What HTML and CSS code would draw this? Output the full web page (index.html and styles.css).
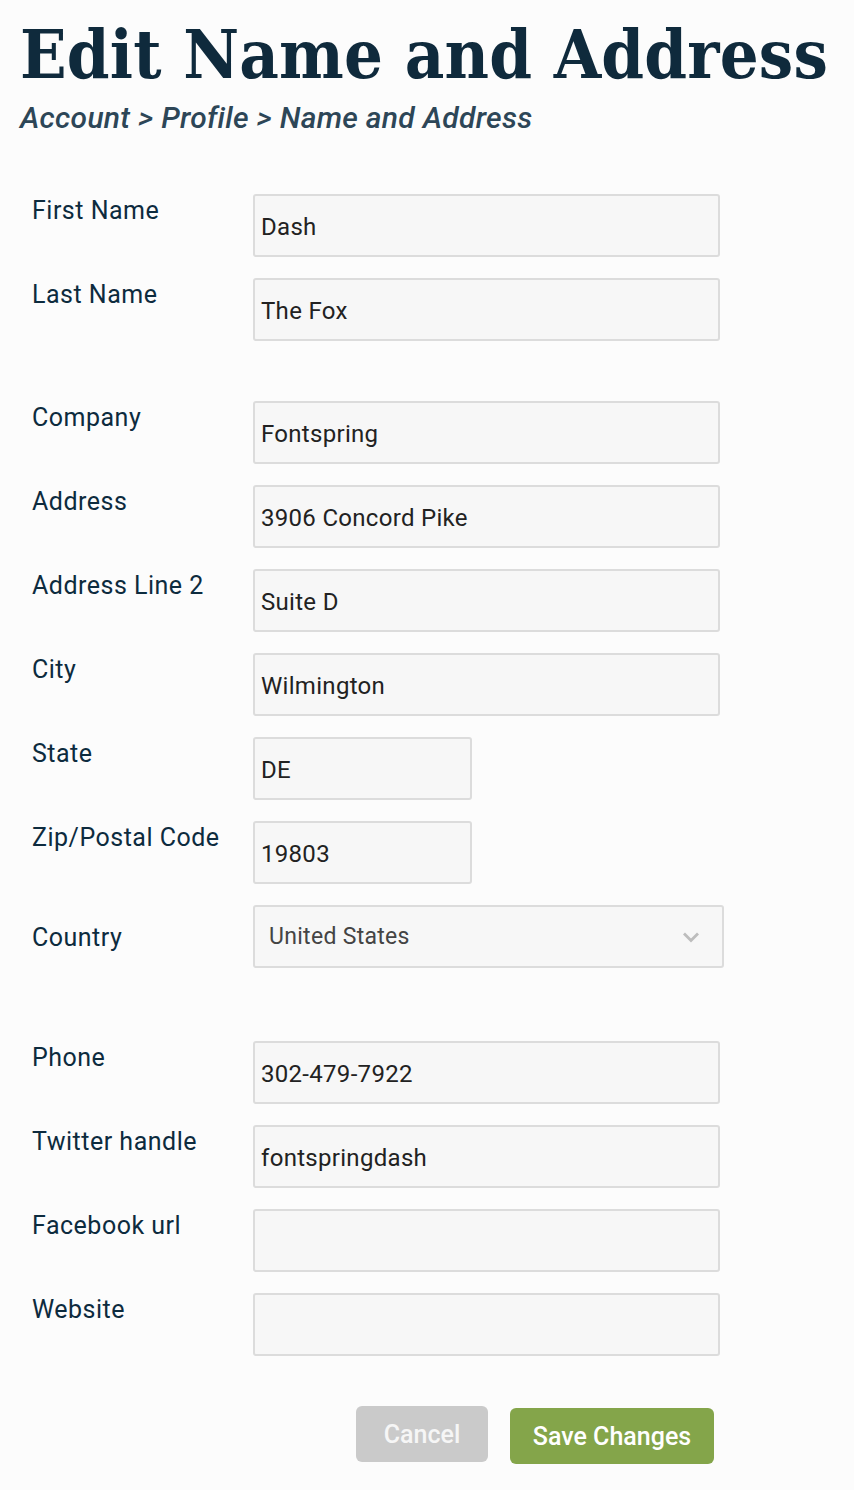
FILE: index.html
```html
<!DOCTYPE html>
<html>
<head>
<meta charset="utf-8">
<link rel="stylesheet" href="styles.css">
</head>
<body>
<div class="page">
  <h1 class="title">Edit Name and Address</h1>
  <div class="crumbs">Account &gt; Profile &gt; Name and Address</div>
  <form class="form">
    <div class="group">
      <div class="row"><label class="label">First Name</label><div class="field">Dash</div></div>
      <div class="row"><label class="label">Last Name</label><div class="field">The Fox</div></div>
    </div>
    <div class="group">
      <div class="row"><label class="label">Company</label><div class="field">Fontspring</div></div>
      <div class="row"><label class="label">Address</label><div class="field">3906 Concord Pike</div></div>
      <div class="row"><label class="label">Address Line 2</label><div class="field">Suite D</div></div>
      <div class="row"><label class="label">City</label><div class="field">Wilmington</div></div>
      <div class="row"><label class="label">State</label><div class="field short">DE</div></div>
      <div class="row"><label class="label">Zip/Postal Code</label><div class="field short">19803</div></div>
      <div class="row center"><label class="label">Country</label>
        <div class="field select">United States
          <svg class="chev" width="18" height="12" viewBox="0 0 18 12"><path d="M2 2.5 L9 9.5 L16 2.5" fill="none" stroke="#bdbdbd" stroke-width="2.8"/></svg>
        </div>
      </div>
    </div>
    <div class="group">
      <div class="row"><label class="label">Phone</label><div class="field">302-479-7922</div></div>
      <div class="row"><label class="label">Twitter handle</label><div class="field">fontspringdash</div></div>
      <div class="row"><label class="label">Facebook url</label><div class="field"></div></div>
      <div class="row"><label class="label">Website</label><div class="field"></div></div>
    </div>
    <div class="actions">
      <button type="button" class="btn cancel">Cancel</button>
      <button type="button" class="btn save">Save Changes</button>
    </div>
  </form>
</div>
</body>
</html>
```
FILE: styles.css
```css
html, body { margin: 0; padding: 0; background: #fcfcfc; }
.page { padding: 0 0 0 20px; font-family: Roboto, "Liberation Sans", sans-serif; }
.title {
  margin: 0;
  padding-top: 14px;
  font-family: "DejaVu Serif", serif;
  font-stretch: condensed;
  font-weight: bold;
  font-size: 68px;
  line-height: 80px;
  color: #0f2a3c;
  letter-spacing: 0.2px;
}
.crumbs {
  margin-top: 6px;
  font-family: Roboto, sans-serif;
  font-style: italic;
  font-weight: 500;
  font-size: 30px;
  color: #2d4657;
  letter-spacing: 0.3px;
}
.form { margin-top: 59px; padding-left: 12px; }
.group { display: flex; flex-direction: column; gap: 21px; margin-bottom: 60px; }
.group:nth-child(2) { margin-bottom: 73px; }
.row { display: grid; grid-template-columns: 221px auto; align-items: start; }
.row.center { align-items: center; }
.label { font-size: 25px; color: #0d2b3e; padding-top: 2px; letter-spacing: 0.5px; }
.field {
  box-sizing: border-box;
  width: 467px; height: 63px;
  background: #f7f7f7;
  border: 2px solid #dcdcdc;
  border-radius: 3px;
  padding: 17px 0 0 6px;
  font-size: 24px;
  letter-spacing: 0.3px;
  color: #222;
}
.field.short { width: 219px; }
.field.select {
  width: 471px;
  display: flex; align-items: center; justify-content: space-between;
  padding: 0 22px 0 14px; color: #444; font-size: 23px;
}
.actions { display: flex; gap: 22px; margin-left: 324px; margin-top: -10px; align-items: flex-start; }
.btn {
  font-family: Roboto, sans-serif; font-size: 25px; font-weight: 500;
  border: none; border-radius: 6px; color: #fff;
}
.cancel { width: 132px; height: 56px; background: #cacaca; color: #f6f6f6; }
.save { width: 204px; height: 56px; background: #84a54a; margin-top: 2px; }
```
